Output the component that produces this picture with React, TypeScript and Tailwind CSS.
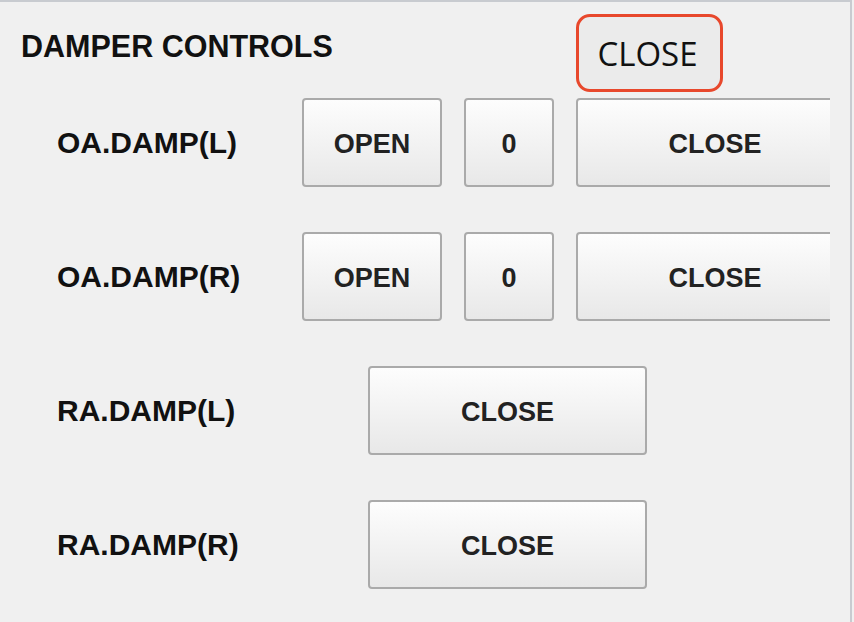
import React from "react";

const btn =
  "shrink-0 h-[89px] flex items-center justify-center rounded-[4px] border-2 border-[#aaaaaa] bg-linear-to-b from-[#fdfdfd] to-[#e8e8e8] pt-[4px] text-[27px] font-bold text-[#222222]";

function Label({ text }: { text: string }) {
  return (
    <div className="w-[245px] shrink-0 text-[30px] font-bold leading-none text-[#111111]">
      {text}
    </div>
  );
}

function OutsideAirRow({ label }: { label: string }) {
  return (
    <div className="flex h-[89px] w-[773px] items-center overflow-hidden">
      <Label text={label} />
      <div className={`${btn} w-[140px]`}>OPEN</div>
      <div className={`${btn} ml-[22px] w-[90px]`}>0</div>
      <div className={`${btn} ml-[22px] w-[278px]`}>CLOSE</div>
    </div>
  );
}

function ReturnAirRow({ label }: { label: string }) {
  return (
    <div className="flex h-[89px] w-[773px] items-center">
      <Label text={label} />
      <div className={`${btn} ml-[66px] w-[279px]`}>CLOSE</div>
    </div>
  );
}

export default function App() {
  return (
    <div className="relative h-[622px] w-[854px] overflow-hidden bg-[#f0f0f0] font-['Liberation_Sans',Arial,sans-serif]">
      <div className="h-full w-[852px] border-t-2 border-r-2 border-[#c8cbd0] pt-[29px]">
        <h1 className="h-[30px] pl-[21px] text-[30.5px] font-bold leading-[30px] text-[#111111]">
          DAMPER CONTROLS
        </h1>
        <div className="mt-[37px] flex flex-col gap-[45px] pl-[57px]">
          <OutsideAirRow label="OA.DAMP(L)" />
          <OutsideAirRow label="OA.DAMP(R)" />
          <ReturnAirRow label="RA.DAMP(L)" />
          <ReturnAirRow label="RA.DAMP(R)" />
        </div>
      </div>

      {/* status tooltip */}
      <div className="absolute left-[576px] top-[14px] flex h-[78px] w-[147px] items-center justify-center rounded-[14px] border-[3px] border-[#e8482c] bg-[#ebebeb] pr-[4px] font-['Open_Sans',sans-serif] text-[33px] leading-none text-[#111111]">
        CLOSE
      </div>
    </div>
  );
}
